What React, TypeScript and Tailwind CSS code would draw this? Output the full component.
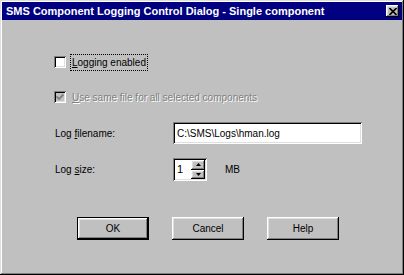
import React from "react";

const raised =
  "shadow-[inset_-1px_-1px_#000000,inset_1px_1px_#ffffff,inset_-2px_-2px_#808080,inset_2px_2px_#dfdfdf]";
const sunken =
  "shadow-[inset_1px_1px_#808080,inset_-1px_-1px_#ffffff,inset_2px_2px_#000000,inset_-2px_-2px_#dfdfdf]";

function CheckBox({ checked, disabled }: { checked?: boolean; disabled?: boolean }) {
  return (
    <div
      className={`w-[12px] h-[12px] shrink-0 ${sunken} ${disabled ? "bg-[#c0c0c0]" : "bg-white"} flex items-center justify-center`}
    >
      {checked && (
        <svg width="8" height="8" viewBox="0 0 8 8">
          <path
            d="M0.5 3.5 L3 6 L7.5 1.5"
            stroke={disabled ? "#808080" : "#000"}
            strokeWidth="1.8"
            fill="none"
          />
        </svg>
      )}
    </div>
  );
}

function Button({ label, isDefault }: { label: string; isDefault?: boolean }) {
  return (
    <div
      className={`w-[72px] h-[23px] bg-[#c0c0c0] flex items-center justify-center text-[10px] text-black ${
        isDefault
          ? "shadow-[inset_0_0_0_1px_#000000,inset_-2px_-2px_#000000,inset_2px_2px_#ffffff,inset_-3px_-3px_#808080,inset_3px_3px_#dfdfdf]"
          : raised
      }`}
    >
      {label}
    </div>
  );
}

export default function App() {
  return (
    <div
      className="w-[404px] h-[275px] bg-[#c0c0c0] p-[2px] flex flex-col shadow-[inset_-1px_-1px_#000000,inset_1px_1px_#dfdfdf,inset_-2px_-2px_#808080,inset_2px_2px_#ffffff] overflow-hidden"
      style={{ fontFamily: "'Liberation Sans', Arial, sans-serif" }}
    >
      {/* Title bar */}
      <div className="h-[18px] bg-[#000080] flex items-center justify-between pl-[4px] pr-[3px]">
        <span className="text-white font-bold text-[11px] leading-none">
          SMS Component Logging Control Dialog - Single component
        </span>
        <div className={`w-[13px] h-[12px] bg-[#c0c0c0] ${raised} flex items-center justify-center`}>
          <svg width="8" height="7" viewBox="0 0 8 7">
            <path d="M0.5 0 L7.5 7 M7.5 0 L0.5 7" stroke="#000" strokeWidth="1.6" />
          </svg>
        </div>
      </div>

      {/* Content */}
      <div className="flex flex-col pl-[52px] text-[10px] text-black">
        {/* Logging enabled */}
        <div className="mt-[33px] h-[18px] flex items-center">
          <CheckBox />
          <div className="ml-[4px] h-[17px] px-[1px] flex items-center outline-1 outline-dotted outline-black -outline-offset-1">
            <span className="px-[1px]">
              <span className="underline underline-offset-1">L</span>ogging enabled
            </span>
          </div>
        </div>

        {/* Use same file */}
        <div className="mt-[17px] h-[18px] flex items-center">
          <CheckBox checked disabled />
          <span className="ml-[6px] text-[#808080] [text-shadow:1px_1px_0_#ffffff]">
            <span className="underline underline-offset-1">U</span>se same file for all selected components
          </span>
        </div>

        {/* Log filename */}
        <div className="mt-[16px] h-[22px] flex items-center">
          <span className="w-[119px] pl-[1px]">
            Log <span className="underline underline-offset-1">f</span>ilename:
          </span>
          <div className={`w-[189px] h-[22px] bg-white ${sunken} flex items-center pl-[4px]`}>
            C:\SMS\Logs\hman.log
          </div>
        </div>

        {/* Log size */}
        <div className="mt-[14px] h-[23px] flex items-center">
          <span className="w-[119px] pl-[1px]">
            Log <span className="underline underline-offset-1">s</span>ize:
          </span>
          <div className={`w-[34px] h-[23px] bg-white ${sunken} flex p-[2px]`}>
            <div className="flex-1 flex items-center pl-[2px] text-[11px]">1</div>
            <div className="w-[14px] flex flex-col">
              <div className={`flex-1 bg-[#c0c0c0] ${raised} flex items-center justify-center`}>
                <svg width="5" height="3" viewBox="0 0 5 3">
                  <path d="M2.5 0 L5 3 L0 3 Z" fill="#000" />
                </svg>
              </div>
              <div className={`flex-1 bg-[#c0c0c0] ${raised} flex items-center justify-center`}>
                <svg width="5" height="3" viewBox="0 0 5 3">
                  <path d="M0 0 L5 0 L2.5 3 Z" fill="#000" />
                </svg>
              </div>
            </div>
          </div>
          <span className="ml-[18px]">MB</span>
        </div>

        {/* Buttons */}
        <div className="mt-[36px] ml-[23px] flex gap-[23px]">
          <Button label="OK" isDefault />
          <Button label="Cancel" />
          <Button label="Help" />
        </div>
      </div>
    </div>
  );
}
